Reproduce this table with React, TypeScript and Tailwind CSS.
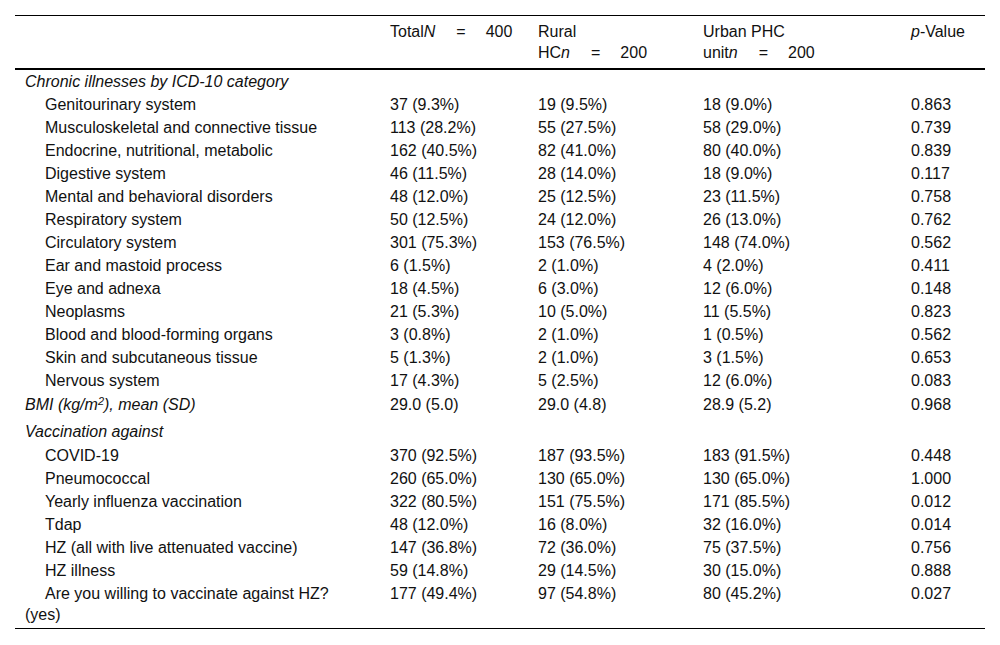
import React from 'react';

type Row = {
  label: React.ReactNode;
  total?: string;
  rural?: string;
  urban?: string;
  p?: string;
  kind: 'head' | 'sub' | 'plain';
  cls?: string;
};

const rows: Row[] = [
  { kind: 'head', label: 'Chronic illnesses by ICD-10 category' },
  { kind: 'sub', label: 'Genitourinary system', total: '37 (9.3%)', rural: '19 (9.5%)', urban: '18 (9.0%)', p: '0.863' },
  { kind: 'sub', label: 'Musculoskeletal and connective tissue', total: '113 (28.2%)', rural: '55 (27.5%)', urban: '58 (29.0%)', p: '0.739' },
  { kind: 'sub', label: 'Endocrine, nutritional, metabolic', total: '162 (40.5%)', rural: '82 (41.0%)', urban: '80 (40.0%)', p: '0.839' },
  { kind: 'sub', label: 'Digestive system', total: '46 (11.5%)', rural: '28 (14.0%)', urban: '18 (9.0%)', p: '0.117' },
  { kind: 'sub', label: 'Mental and behavioral disorders', total: '48 (12.0%)', rural: '25 (12.5%)', urban: '23 (11.5%)', p: '0.758' },
  { kind: 'sub', label: 'Respiratory system', total: '50 (12.5%)', rural: '24 (12.0%)', urban: '26 (13.0%)', p: '0.762' },
  { kind: 'sub', label: 'Circulatory system', total: '301 (75.3%)', rural: '153 (76.5%)', urban: '148 (74.0%)', p: '0.562' },
  { kind: 'sub', label: 'Ear and mastoid process', total: '6 (1.5%)', rural: '2 (1.0%)', urban: '4 (2.0%)', p: '0.411' },
  { kind: 'sub', label: 'Eye and adnexa', total: '18 (4.5%)', rural: '6 (3.0%)', urban: '12 (6.0%)', p: '0.148' },
  { kind: 'sub', label: 'Neoplasms', total: '21 (5.3%)', rural: '10 (5.0%)', urban: '11 (5.5%)', p: '0.823' },
  { kind: 'sub', label: 'Blood and blood-forming organs', total: '3 (0.8%)', rural: '2 (1.0%)', urban: '1 (0.5%)', p: '0.562' },
  { kind: 'sub', label: 'Skin and subcutaneous tissue', total: '5 (1.3%)', rural: '2 (1.0%)', urban: '3 (1.5%)', p: '0.653' },
  { kind: 'sub', label: 'Nervous system', total: '17 (4.3%)', rural: '5 (2.5%)', urban: '12 (6.0%)', p: '0.083' },
  {
    kind: 'head',
    cls: 'pt-[2px] pb-[3px]',
    label: (
      <>
        BMI (kg/m<sup className="text-[11px]">2</sup>), mean (SD)
      </>
    ),
    total: '29.0 (5.0)',
    rural: '29.0 (4.8)',
    urban: '28.9 (5.2)',
    p: '0.968',
  },
  { kind: 'head', cls: 'pt-[3px] pb-[2px]', label: 'Vaccination against' },
  { kind: 'sub', label: 'COVID-19', total: '370 (92.5%)', rural: '187 (93.5%)', urban: '183 (91.5%)', p: '0.448' },
  { kind: 'sub', label: 'Pneumococcal', total: '260 (65.0%)', rural: '130 (65.0%)', urban: '130 (65.0%)', p: '1.000' },
  { kind: 'sub', label: 'Yearly influenza vaccination', total: '322 (80.5%)', rural: '151 (75.5%)', urban: '171 (85.5%)', p: '0.012' },
  { kind: 'sub', label: 'Tdap', total: '48 (12.0%)', rural: '16 (8.0%)', urban: '32 (16.0%)', p: '0.014' },
  { kind: 'sub', label: 'HZ (all with live attenuated vaccine)', total: '147 (36.8%)', rural: '72 (36.0%)', urban: '75 (37.5%)', p: '0.756' },
  { kind: 'sub', label: 'HZ illness', total: '59 (14.8%)', rural: '29 (14.5%)', urban: '30 (15.0%)', p: '0.888' },
  {
    kind: 'sub',
    cls: 'pt-px pb-[3px]',
    label: (
      <>
        Are you willing to vaccinate against HZ?
        <br />
        (yes)
      </>
    ),
    total: '177 (49.4%)',
    rural: '97 (54.8%)',
    urban: '80 (45.2%)',
    p: '0.027',
  },
];

const Eq: React.FC<{ n: string; v: string }> = ({ n, v }) => (
  <>
    <i>{n}</i>
    <span className="inline-block ml-[21px] mr-[20px]">=</span>
    {v}
  </>
);

export default function App() {
  return (
    <div className="w-[1000px] h-[645px] bg-white pt-[15px] pl-[15px] text-[16px] leading-[21px] text-[#111] font-['Liberation_Sans',Arial,sans-serif]">
      <table className="w-[970px] border-collapse table-fixed text-left">
        <colgroup>
          <col className="w-[365px]" />
          <col className="w-[148px]" />
          <col className="w-[165px]" />
          <col className="w-[208px]" />
          <col className="w-[84px]" />
        </colgroup>
        <thead>
          <tr className="border-t border-b-2 border-black align-top">
            <th className="font-normal pl-[10px] pt-[5px] pb-[5px]"></th>
            <th className="font-normal pl-[10px] pt-[5px] pb-[5px]">
              Total<Eq n="N" v="400" />
            </th>
            <th className="font-normal pl-[10px] pt-[5px] pb-[5px]">
              Rural
              <br />
              HC<Eq n="n" v="200" />
            </th>
            <th className="font-normal pl-[10px] pt-[5px] pb-[5px]">
              Urban PHC
              <br />
              unit<Eq n="n" v="200" />
            </th>
            <th className="font-normal pl-[10px] pt-[5px] pb-[5px]">
              <i>p</i>-Value
            </th>
          </tr>
        </thead>
        <tbody className="border-b border-black">
          {rows.map((r, i) => {
            const pad = r.cls ?? 'py-px';
            return (
              <tr key={i} className="align-top">
                <td
                  className={`pl-[10px] ${pad} ${r.kind === 'sub' ? 'indent-[20px]' : ''} ${
                    r.kind === 'head' ? 'italic' : ''
                  }`}
                >
                  {r.label}
                </td>
                <td className={`pl-[10px] ${pad}`}>{r.total}</td>
                <td className={`pl-[10px] ${pad}`}>{r.rural}</td>
                <td className={`pl-[10px] ${pad}`}>{r.urban}</td>
                <td className={`pl-[10px] ${pad}`}>{r.p}</td>
              </tr>
            );
          })}
        </tbody>
      </table>
    </div>
  );
}
